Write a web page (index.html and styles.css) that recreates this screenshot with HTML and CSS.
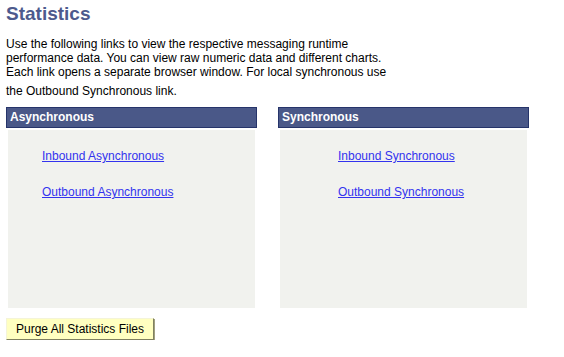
FILE: index.html
```html
<!DOCTYPE html>
<html>
  <head>
    <title>Statistics</title>
    <meta charset="utf-8" />
    <link rel="stylesheet" href="styles.css">
  </head>
  <body>
    <div class="page">
      <h1 class="title">Statistics</h1>
      <p class="intro">Use the following links to view the respective messaging runtime<br>
        performance data. You can view raw numeric data and different charts.<br>
        Each link opens a separate browser window. For local synchronous use<br>
        <span class="last">the Outbound Synchronous link.</span></p>
      <div class="groups">
        <div class="group">
          <div class="head">Asynchronous</div>
          <div class="panel async">
            <a href="#">Inbound Asynchronous</a>
            <a href="#">Outbound Asynchronous</a>
          </div>
        </div>
        <div class="group">
          <div class="head">Synchronous</div>
          <div class="panel sync">
            <a href="#">Inbound Synchronous</a>
            <a href="#">Outbound Synchronous</a>
          </div>
        </div>
      </div>
      <button class="purge">Purge All Statistics Files</button>
    </div>
  </body>
</html>
```
FILE: styles.css
```css
*{
  margin:0px;
  padding:0px;
}
body{
  font-family:"Liberation Sans", Arial, sans-serif;
  font-size:12px;
  color:#000;
  background:#fff;
}
.page{
  padding:3px 0 0 6px;
}
.title{
  font-size:19px;
  font-weight:bold;
  color:#4d5a8d;
  line-height:22px;
}
.intro{
  margin-top:12px;
  line-height:14px;
}
.intro .last{
  display:inline-block;
  margin-top:5px;
}
.groups{
  display:flex;
  gap:21px;
  margin-top:9px;
}
.group{
  width:251px;
}
.head{
  height:19px;
  line-height:19px;
  background:#4a5888;
  border:1px solid #26346a;
  color:#fff;
  font-weight:bold;
  padding-left:3px;
}
.panel{
  margin:2px 2px 0 2px;
  height:178px;
  background:#f1f2ee;
  display:flex;
  flex-direction:column;
  align-items:flex-start;
  gap:22px;
  padding-top:19px;
  box-sizing:border-box;
}
.panel a{
  color:#3333ee;
  text-decoration:underline;
  line-height:14px;
}
.async{
  padding-left:34px;
}
.sync{
  padding-left:58px;
}
.purge{
  margin-top:10px;
  width:148px;
  height:22px;
  font-family:"Liberation Sans", Arial, sans-serif;
  font-size:12px;
  color:#000;
  background:#ffffc0;
  border:1px solid;
  border-color:#f4f4d8 #808060 #808060 #f4f4d8;
  box-shadow:1px 1px 0 #a0a080;
}
```
